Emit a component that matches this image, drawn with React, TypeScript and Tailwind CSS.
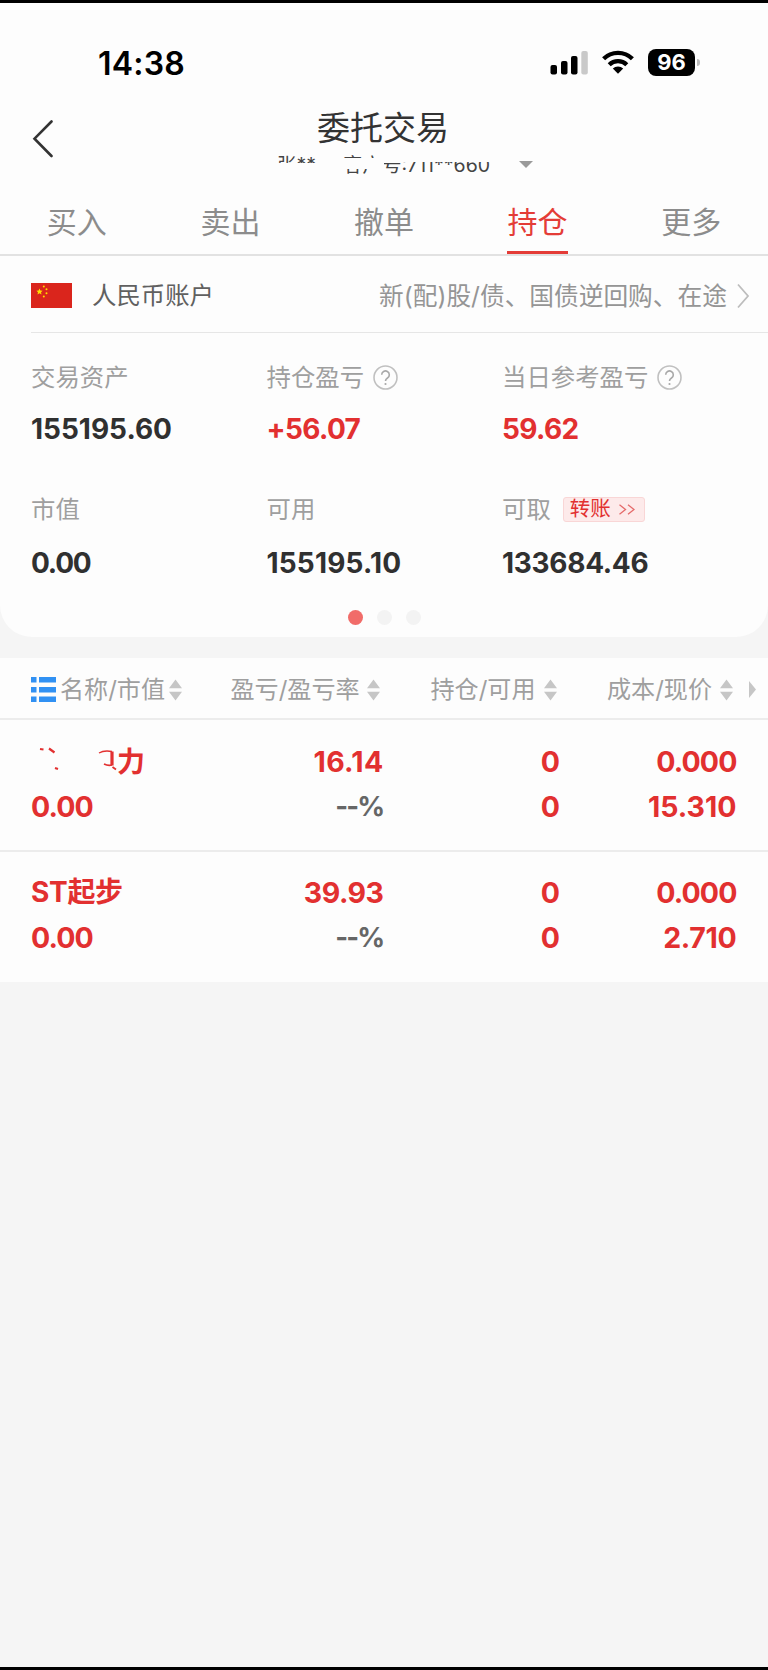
import React from 'react';

const CJK = "font-['Inter','Noto_Sans_CJK_SC',sans-serif]";

function Sort() {
  return (
    <svg width="13" height="22" viewBox="0 0 13 22" className="mt-[1px] shrink-0" fill="#c6c6c6">
      <path d="M6.500 .5L13 9.200H0zM6.500 21.500L13 12.800H0z" />
    </svg>
  );
}

function Help() {
  return (
    <svg width="25" height="25" viewBox="0 0 25 25" fill="none" stroke="#c0c0c0" strokeWidth="1.6" className="ml-[8.500px] shrink-0">
      <circle cx="12.5" cy="12.5" r="11.5" />
      <path d="M8.7 9.800a3.800 3.800 0 1 1 5.800 3.200c-1.400.9-2 1.500-2 3" stroke="#a8a8a8" />
      <circle cx="12.500" cy="19" r="1.100" fill="#a8a8a8" stroke="none" />
    </svg>
  );
}

type StatProps = { label: string; value: string; tone: string; extra?: React.ReactNode };

function Stat({ label, value, tone, extra }: StatProps) {
  return (
    <div className="flex w-[235.500px] flex-col">
      <div className="flex h-[30px] items-center whitespace-nowrap text-[24.400px] text-[#9f9f9f]">
        {label}
        {extra}
      </div>
      <div className={`mt-[20px] h-[34px] text-[28px] font-bold leading-[34px] ${tone}`}>{value}</div>
    </div>
  );
}

type Cell = { text: string; tone: string };

function Column({ width, top, bottom }: { width: string; top: Cell; bottom: Cell }) {
  return (
    <div className={`${width} text-right`}>
      <div className={top.tone}>{top.text}</div>
      <div className={bottom.tone}>{bottom.text}</div>
    </div>
  );
}

function Row({ name, profit, cost, price }: { name: React.ReactNode; profit: Cell; cost: Cell; price: Cell }) {
  return (
    <div className="flex h-[130px] pt-[19px] text-[28.500px] font-bold leading-[45px] text-[#e23030]">
      <div className="w-[183px] pl-[31px]">
        <div className="h-[45px] whitespace-nowrap text-[28px] tracking-[-0.300px]">{name}</div>
        <div className="tracking-[-0.900px]">0.00</div>
      </div>
      <Column width="w-[200.500px]" top={profit} bottom={{ text: '--%', tone: 'text-[#666] tracking-[-1.800px] text-[27.500px]' }} />
      <Column width="w-[176.500px]" top={{ text: '0', tone: '' }} bottom={{ text: '0', tone: '' }} />
      <Column width="w-[176.500px]" top={cost} bottom={price} />
    </div>
  );
}

export default function App() {
  const tabs = ['买入', '卖出', '撤单', '持仓', '更多'];
  return (
    <div className={`flex h-[1670px] w-[768px] flex-col overflow-hidden border-y-[3px] border-black bg-[#f5f5f5] ${CJK}`}>
      <div className="flex h-[99px] shrink-0 bg-[#fdfdfd] pt-[41px]">
        <div className="ml-[98px] w-[452px] text-[32px] font-semibold leading-[39px] tracking-[0.200px] text-black">14:38</div>
        <svg width="38" height="25" viewBox="0 0 38 25" className="mt-[6px]">
          <rect x="0.500" y="15" width="6.500" height="9.500" rx="2" />
          <rect x="11" y="11" width="6.500" height="13.500" rx="2" />
          <rect x="21" y="6" width="6.500" height="18.500" rx="2" />
          <rect x="31.300" y="1" width="6.500" height="23.500" rx="2" fill="#c9c9c9" />
        </svg>
        <svg width="32" height="25" viewBox="0 0 32 25" className="ml-[14px] mt-[6px]" fill="none" stroke="#000" strokeWidth="4.300">
          <path d="M1.600 8.700a20.500 20.500 0 0 1 28.800 0" />
          <path d="M7.200 14.700a12.700 12.700 0 0 1 17.600 0" />
          <path d="M16 23.700l-5.200-5.200a7.500 7.500 0 0 1 10.400 0z" fill="#000" stroke="none" />
        </svg>
        <div className="ml-[14px] mt-[5px] flex h-[27px] w-[47px] items-center justify-center rounded-[8px] bg-black pb-[1px] text-[22px] font-bold leading-none text-white">96</div>
        <div className="ml-[2px] mt-[15px] h-[7px] w-[3px] rounded-r-full bg-[#bbb]" />
      </div>

      <div className="flex h-[88px] shrink-0 bg-[#fdfdfd]">
        <svg width="22" height="38" viewBox="0 0 22 38" className="ml-[32px] mt-[18px]" fill="none" stroke="#333" strokeWidth="2.600" strokeLinecap="round">
          <path d="M19.500 1.500L2.500 18.700L19.500 36" />
        </svg>
        <div className="ml-[223px] flex w-[260px] flex-col">
          <div className="ml-[40px] mt-[6px] h-[41px] whitespace-nowrap text-[33px] leading-[41px] text-[#333]">委托交易</div>
          <div className="relative h-[28px] w-[260px] overflow-hidden whitespace-nowrap text-[19.500px] leading-[26px] text-[#444]">
            <span className="absolute left-0 top-[3px]">张**</span>
            <span className="absolute left-[66px] top-[3px]">客户号:711**660</span>
            <span className="absolute left-0 top-[14px] h-[14px] w-[66px] bg-[#fdfdfd]" />
            <span className="absolute left-[66px] top-[9px] h-[11px] w-[41px] bg-[#fdfdfd]" />
            <span className="absolute left-[97px] top-0 h-[13px] w-[124px] bg-[#fdfdfd]" />
            <svg width="14" height="7" viewBox="0 0 14 7" className="absolute left-[242px] top-[12px]" fill="#9a9a9a"><path d="M0 0H14L7 7z" /></svg>
          </div>
        </div>
      </div>

      <div className="flex h-[66px] shrink-0 border-b-2 border-[#e2e2e2] bg-[#fdfdfd]">
        {tabs.map((t, i) => (
          <div key={t} className="flex w-[153.600px] justify-center">
            <div className={`flex h-[64px] w-[61px] items-center justify-center whitespace-nowrap border-b-[3px] pt-[3px] text-[30px] ${i === 3 ? 'border-[#e43c37] text-[#e43c37]' : 'border-transparent text-[#8c8c8c]'}`}>{t}</div>
          </div>
        ))}
      </div>

      <div className="h-[381px] shrink-0 rounded-b-[32px] bg-[#fdfdfd]">
        <div className="ml-[31px] flex h-[77px] items-center border-b border-[#e6e6e6]">
          <svg width="41" height="25" viewBox="0 0 41 25" className="mt-[2px] shrink-0">
            <rect width="41" height="25" fill="#da251c" />
            <g fill="#ffde00">
              <path d="M8.500 5.600l.9 2 2.200.2-1.600 1.500.5 2.200-2-1.200-2 1.200.5-2.200-1.600-1.500 2.200-.2z" />
              <circle cx="12.800" cy="3.500" r="1" /><circle cx="15.500" cy="6.300" r="1" /><circle cx="15.500" cy="10.300" r="1" /><circle cx="12.800" cy="13.500" r="1" />
            </g>
          </svg>
          <div className="ml-[20px] mt-[2px] w-[287px] whitespace-nowrap text-[24.400px] text-[#606060]">人民币账户</div>
          <div className="mt-[6px] w-[348px] whitespace-nowrap text-[24.700px] text-[#959595]">新(配)股/债、国债逆回购、在途</div>
          <svg width="13" height="26" viewBox="0 0 13 26" className="ml-[10px] mt-[4px]" fill="none" stroke="#bdbdbd" strokeWidth="1.800"><path d="M1 1.500L11 13L1 24.500" /></svg>
        </div>
        <div className="ml-[31px] flex pt-[29px]">
          <Stat label="交易资产" value="155195.60" tone="text-[#303030] tracking-[0px]" />
          <Stat label="持仓盈亏" value="+56.07" tone="text-[#e23030] tracking-[-0.600px]" extra={<Help />} />
          <Stat label="当日参考盈亏" value="59.62" tone="text-[#e23030] tracking-[-0.600px]" extra={<Help />} />
        </div>
        <div className="ml-[31px] mt-[48px] flex [&>div>div:last-child]:mt-[22px]">
          <Stat label="市值" value="0.00" tone="text-[#303030] tracking-[-1.200px]" />
          <Stat label="可用" value="155195.10" tone="text-[#303030] tracking-[0.200px]" />
          <Stat label="可取" value="133684.46" tone="text-[#303030] tracking-[-0.300px]" extra={
            <div className="ml-[12px] flex h-[25px] w-[82px] items-center rounded-[3px] border border-[#f9d6d6] bg-[#fdeaea] pl-[6px] text-[20.500px] text-[#e23030]">
              <span className="pt-[1px]">转账</span>
              <svg width="16" height="11" viewBox="0 0 16 11" className="ml-[8px] mt-[1px]" fill="none" stroke="#e56a6a" strokeWidth="1.300"><path d="M.5.800L6.500 5.500L.5 10.200M9 .800L15 5.500L9 10.200" /></svg>
            </div>
          } />
        </div>
        <div className="ml-[348px] mt-[29.500px] flex gap-[14px]">
          <div className="h-[15px] w-[15px] rounded-full bg-[#f16c69]" />
          <div className="h-[15px] w-[15px] rounded-full bg-[#f3f3f3]" />
          <div className="h-[15px] w-[15px] rounded-full bg-[#f3f3f3]" />
        </div>
      </div>

      <div className="mt-[21px] h-[324px] shrink-0 bg-[#fdfdfd]">
        <div className="flex h-[62px] items-center whitespace-nowrap border-b-2 border-[#ececec] pt-[2px] text-[24.100px] text-[#9f9f9f]">
          <svg width="25" height="25" viewBox="0 0 25 25" fill="#3191f3" className="ml-[31px] shrink-0">
            <path d="M0 0h5.500v5.500H0zM8 0h17v5.500H8zM0 10h5.500v5.500H0zM8 10h17v5.500H8zM0 19.500h5.500V25H0zM8 19.500h17V25H8z" />
          </svg>
          <div className="ml-[4px] w-[109px] pt-[3px]">名称/市值</div><Sort />
          <div className="ml-[48.500px] w-[136px] pt-[3px]">盈亏/盈亏率</div><Sort />
          <div className="ml-[51px] w-[113px] pt-[3px]">持仓/可用</div><Sort />
          <div className="ml-[50.500px] w-[113px] pt-[3px]">成本/现价</div><Sort />
          <svg width="7" height="17" viewBox="0 0 7 17" className="ml-[16px]" fill="#c6c6c6"><path d="M0 0L7 8.500L0 17z" /></svg>
        </div>
        <Row
          name={
            <div className="flex">
              <svg width="86" height="45" viewBox="0 0 86 45" fill="none" stroke="#e23030" strokeWidth="2.200">
                <path d="M9 10l3.500.5M18 9.500l5.500 4M24 29l3 1" />
                <path d="M68 14q5-3 13-1.500" strokeWidth="1.300" />
                <path d="M81 12.500v14" strokeWidth="3.200" />
                <path d="M73 25q4 2 8 1M81.500 28l3.500 2.500" strokeWidth="1.800" />
              </svg>
              <span className="pt-[1px]">力</span>
            </div>
          }
          profit={{ text: '16.14', tone: 'tracking-[0.300px]' }}
          cost={{ text: '0.000', tone: 'tracking-[-0.900px]' }}
          price={{ text: '15.310', tone: '' }}
        />
        <div className="border-t-2 border-[#ececec] [&>div]:pt-[18px]">
          <Row
            name="ST起步"
            profit={{ text: '39.93', tone: 'tracking-[-0.500px]' }}
            cost={{ text: '0.000', tone: 'tracking-[-0.900px]' }}
            price={{ text: '2.710', tone: 'tracking-[-0.300px]' }}
          />
        </div>
      </div>
    </div>
  );
}
